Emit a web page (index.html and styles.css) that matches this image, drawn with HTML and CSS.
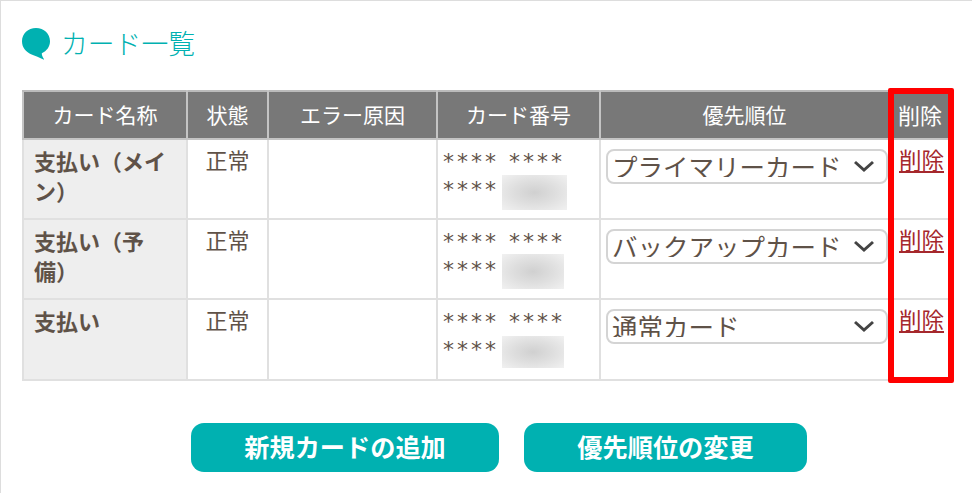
FILE: index.html
```html
<!DOCTYPE html>

<html lang="ja">
	<head>
		<title>カード一覧</title>
		<meta charset="utf-8" />
		<link rel="stylesheet" href="styles.css">
	</head>

	<body>
		<div class="page">
			<h2 class="title">
				<svg class="title-icon" width="28" height="32" viewBox="0 0 28 32">
					<path d="M14 0C6 0 0 5.600 0 13.300C0 19.800 4 23.800 9 26.200C13 27.800 18 29.800 21.500 31.600C21.800 31.800 22.200 31.400 21.900 31C20.500 29 19.800 27 19.800 25.200C24.800 23 28 18.800 28 13.300C28 5.600 22 0 14 0Z" fill="#00b1b1" />
				</svg>
				<span class="title-text">カード一覧</span>
			</h2>

			<!-- card table -->
			<div class="table-wrap">
				<table class="cards">
					<colgroup>
						<col class="col-name">
						<col class="col-state">
						<col class="col-error">
						<col class="col-number">
						<col class="col-priority">
						<col class="col-delete">
					</colgroup>
					<thead>
						<tr>
							<th>カード名称</th>
							<th>状態</th>
							<th>エラー原因</th>
							<th>カード番号</th>
							<th>優先順位</th>
							<th class="th-delete">削除</th>
						</tr>
					</thead>
					<tbody>
						<tr>
							<td class="name">支払い（メイン）</td>
							<td class="state">正常</td>
							<td></td>
							<td class="number">**** ****<br />****<span class="mask mask-wide"></span></td>
							<td class="priority">
								<div class="select-wrap">
									<select class="priority-select">
										<option>プライマリーカード</option>
									</select>
									<svg class="chevron" width="22" height="12" viewBox="0 0 22 12"><path d="M2 2L11 10L20 2" fill="none" stroke="#444" stroke-width="3" /></svg>
								</div>
							</td>
							<td class="delete"><a href="#">削除</a></td>
						</tr>
						<tr>
							<td class="name">支払い（予備）</td>
							<td class="state">正常</td>
							<td></td>
							<td class="number">**** ****<br />****<span class="mask"></span></td>
							<td class="priority">
								<div class="select-wrap">
									<select class="priority-select">
										<option>バックアップカード</option>
									</select>
									<svg class="chevron" width="22" height="12" viewBox="0 0 22 12"><path d="M2 2L11 10L20 2" fill="none" stroke="#444" stroke-width="3" /></svg>
								</div>
							</td>
							<td class="delete"><a href="#">削除</a></td>
						</tr>
						<tr class="last-row">
							<td class="name">支払い</td>
							<td class="state">正常</td>
							<td></td>
							<td class="number">**** ****<br />****<span class="mask mask-short"></span></td>
							<td class="priority">
								<div class="select-wrap">
									<select class="priority-select">
										<option>通常カード</option>
									</select>
									<svg class="chevron" width="22" height="12" viewBox="0 0 22 12"><path d="M2 2L11 10L20 2" fill="none" stroke="#444" stroke-width="3" /></svg>
								</div>
							</td>
							<td class="delete"><a href="#">削除</a></td>
						</tr>
					</tbody>
				</table>
				<!-- red highlight over the delete column -->
				<div class="highlight"></div>
			</div>

			<div class="buttons">
				<a class="btn btn-add" href="#">新規カードの追加</a>
				<a class="btn btn-order" href="#">優先順位の変更</a>
			</div>
		</div>
	</body>
</html>
```

FILE: styles.css
```css
body {
	margin: 0;
	background: #fff;
	font-family: "Noto Sans CJK JP", "Noto Sans", sans-serif;
	color: #5f5248;
}

.page {
	height: 493px;
	box-sizing: border-box;
	border-top: 1px solid #ddd;
	border-left: 1px solid #ddd;
	padding: 27px 0 0 21px;
	overflow: hidden;
}

/* title */
.title {
	display: flex;
	align-items: center;
	gap: 11px;
	height: 32px;
	margin: 0 0 30px;
	font-size: 26.800px;
	font-weight: 300;
	color: #00b1b1;
}

.title-icon {
	flex: none;
}

.title-text {
	margin-top: -4px;
}

/* table */
.table-wrap {
	position: relative;
	width: 928px;
}

.cards {
	table-layout: fixed;
	border-collapse: collapse;
	width: 928px;
	border: 2px solid #e0e0e0;
}

.col-name { width: 164px; }
.col-state { width: 81px; }
.col-error { width: 169px; }
.col-number { width: 163px; }
.col-priority { width: 289px; }
.col-delete { width: 62px; }

.cards th {
	height: 43px;
	padding: 0 0 3px;
	background: #787878;
	border: 2px solid #c4c4c4;
	border-top-color: #bbb;
	font-size: 21px;
	font-weight: 400;
	color: #fff;
}

.cards .th-delete {
	font-size: 22px;
}

.cards td {
	height: 80px;
	padding: 5px 12px 0 10px;
	box-sizing: border-box;
	border: 2px solid #e0e0e0;
	vertical-align: top;
	font-size: 22px;
	line-height: 30px;
}

.last-row td {
	height: 81px;
}

.cards .name {
	background: #eee;
	font-weight: 700;
}

.cards .state {
	padding: 4px 0 0;
	text-align: center;
}

.cards .number {
	padding: 8px 4px 0 5px;
	font-family: "DejaVu Sans", sans-serif;
	line-height: 28px;
	letter-spacing: 3px;
}

.mask {
	display: inline-block;
	width: 62px;
	height: 35px;
	margin: -5px 0 -5px 3px;
	vertical-align: middle;
	background: radial-gradient(ellipse at center, #d0d0d0 0%, #dedede 45%, #f1f1f1 100%);
}

.mask-wide {
	width: 65px;
	margin: -4px 0 -6px 3px;
}

.mask-short {
	height: 32px;
	margin: -3px 0 -4px 3px;
}

.cards .priority {
	padding: 9px 0 0 5px;
}

.select-wrap {
	position: relative;
	width: 282px;
}

.priority-select {
	display: block;
	appearance: none;
	width: 100%;
	height: 35px;
	padding: 0 0 5px 4px;
	box-sizing: border-box;
	background-color: #fff;
	border: 2px solid #d4d4d4;
	border-radius: 8px;
	font-family: "Noto Sans CJK JP", sans-serif;
	font-size: 25.500px;
	line-height: 30px;
	font-weight: 400;
	color: #5f5248;
}

.chevron {
	position: absolute;
	right: 13px;
	top: 11px;
	pointer-events: none;
}

.cards .delete {
	padding: 4px 0 0 9px;
	font-size: 22.500px;
}

.delete a {
	color: #a5282d;
}

/* overlay */
.highlight {
	position: absolute;
	left: 866px;
	top: -2px;
	width: 66px;
	height: 295px;
	box-sizing: border-box;
	border: 6px solid #f00;
	border-radius: 2px;
}

/* buttons */
.buttons {
	display: flex;
	gap: 25px;
	margin: 42px 0 0 169px;
}

.btn {
	display: flex;
	align-items: center;
	justify-content: center;
	height: 49px;
	padding-bottom: 4px;
	box-sizing: border-box;
	border-radius: 13px;
	background: #00b1b1;
	font-size: 25.200px;
	font-weight: 700;
	color: #fff;
	text-decoration: none;
}

.btn-add { width: 308px; }
.btn-order { width: 283px; }
```
